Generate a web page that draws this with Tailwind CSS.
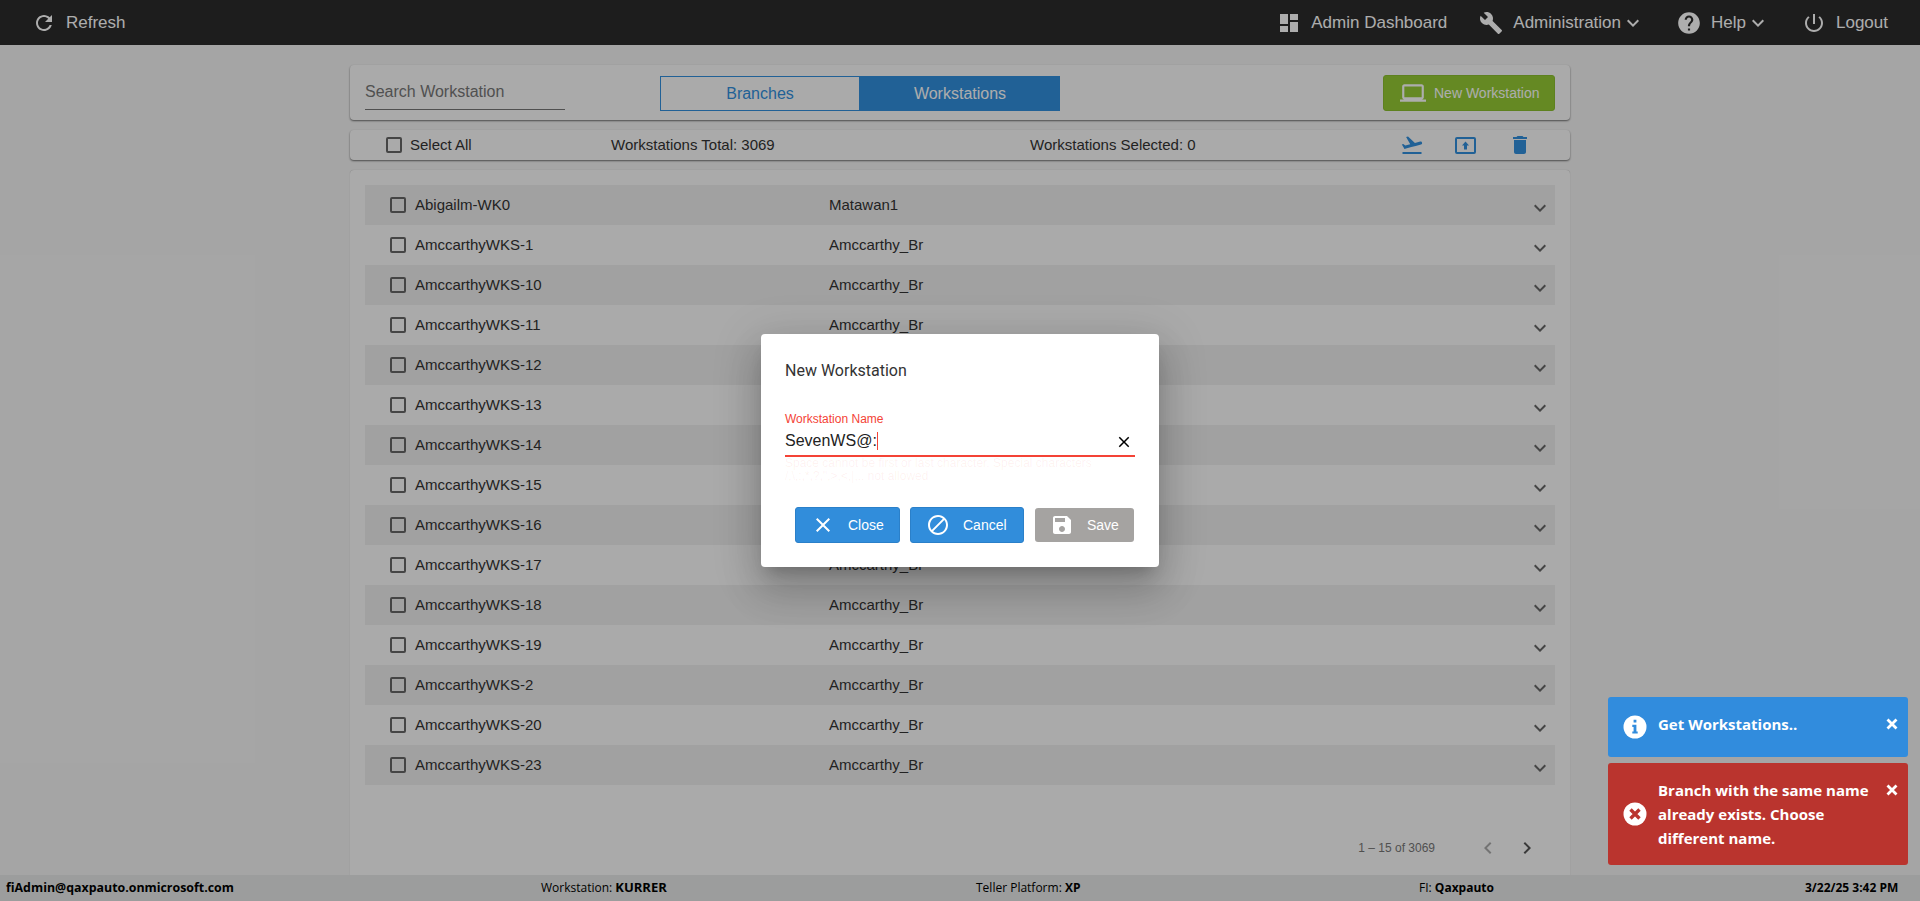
<!DOCTYPE html>
<html>
<head>
<meta charset="utf-8">
<script src="https://cdn.jsdelivr.net/npm/@tailwindcss/browser@4"></script>
</head>
<body class="font-['Liberation_Sans',sans-serif]">
<div class="relative h-[901px] w-[1920px] overflow-hidden bg-[#f4f4f4] flex flex-col">
  <header class="h-[45px] shrink-0 bg-[#2b2b2b] text-white text-[17px] flex items-center pl-[32px] pr-[32px]">
    <div class="flex items-center">
      <svg class="w-6 h-6 mr-[10px]" viewBox="0 0 24 24" fill="currentColor"><path d="M17.65 6.35C16.2 4.9 14.21 4 12 4c-4.42 0-7.99 3.58-7.99 8s3.57 8 7.99 8c3.73 0 6.84-2.55 7.73-6h-2.08c-.82 2.33-3.04 4-5.65 4-3.31 0-6-2.69-6-6s2.69-6 6-6c1.66 0 3.14.69 4.22 1.78L13 11h7V4l-2.35 2.35z"/></svg>
      <span>Refresh</span>
    </div>
    <div class="ml-auto flex items-center">
      <svg class="w-6 h-6 mr-[10px]" viewBox="0 0 24 24" fill="currentColor"><path d="M3 13h8V3H3v10zm0 8h8v-6H3v6zm10 0h8V11h-8v10zm0-18v6h8V3h-8z"/></svg>
      <span>Admin Dashboard</span>
      <svg class="w-6 h-6 ml-[32px] mr-[10px]" viewBox="0 0 24 24" fill="currentColor"><path d="M22.7 19l-9.1-9.1c.9-2.3.4-5-1.5-6.9-2-2-5-2.4-7.4-1.3L9 6 6 9 1.6 4.7C.4 7.1.9 10.1 2.9 12.1c1.9 1.9 4.6 2.4 6.9 1.5l9.1 9.1c.4.4 1 .4 1.4 0l2.3-2.3c.5-.4.5-1.1.1-1.4z"/></svg>
      <span>Administration</span>
      <svg class="w-6 h-6" viewBox="0 0 24 24" fill="currentColor"><path d="M16.59 8.59L12 13.17 7.41 8.59 6 10l6 6 6-6z"/></svg>
      <svg class="w-[26px] h-[26px] ml-[31px] mr-[9px]" viewBox="0 0 24 24" fill="currentColor"><path d="M12 2C6.48 2 2 6.48 2 12s4.48 10 10 10 10-4.48 10-10S17.52 2 12 2zm1 17h-2v-2h2v2zm2.07-7.75l-.9.92C13.45 12.9 13 13.5 13 15h-2v-.5c0-1.1.45-2.1 1.17-2.83l1.24-1.26c.37-.36.59-.86.59-1.41 0-1.1-.9-2-2-2s-2 .9-2 2H8c0-2.21 1.79-4 4-4s4 1.79 4 4c0 .88-.36 1.68-.93 2.25z"/></svg>
      <span>Help</span>
      <svg class="w-6 h-6" viewBox="0 0 24 24" fill="currentColor"><path d="M16.59 8.59L12 13.17 7.41 8.59 6 10l6 6 6-6z"/></svg>
      <svg class="w-6 h-6 ml-[32px] mr-[10px]" viewBox="0 0 24 24" fill="currentColor"><path d="M13 3h-2v10h2V3zm4.83 2.17l-1.42 1.42C17.99 7.86 19 9.81 19 12c0 3.87-3.13 7-7 7s-7-3.13-7-7c0-2.19 1.01-4.14 2.58-5.42L6.17 5.17C4.23 6.82 3 9.26 3 12c0 4.97 4.03 9 9 9s9-4.03 9-9c0-2.74-1.23-5.18-3.17-6.83z"/></svg>
      <span>Logout</span>
    </div>
  </header>

  <main class="flex-1 min-h-0 w-[1220px] mx-auto pt-5 flex flex-col gap-[10px]">
    <section class="h-[55px] shrink-0 bg-[#fbfbfb] rounded shadow-[0_1px_2px_rgba(0,0,0,0.55)] flex items-center pl-[15px] pr-[15px]">
      <div class="w-[200px] h-[35px] -mt-[1px] border-b border-[#777] text-base text-[#777] flex items-center">Search Workstation</div>
      <div class="ml-[95px] mt-[2px] flex h-[35px] w-[400px] text-base">
        <div class="w-[200px] border border-[#318fdd] text-[#318fdd] flex items-center justify-center">Branches</div>
        <div class="w-[200px] bg-[#318fdd] text-white flex items-center justify-center">Workstations</div>
      </div>
      <button class="ml-auto mt-[1px] w-[172px] h-[36px] rounded-[3px] bg-[#95cb34] border border-[#8bbf2e] text-white text-sm flex items-center pl-[16px]">
        <svg class="w-[26px] h-[26px] mr-[8px]" viewBox="0 0 24 24" fill="currentColor"><path d="M20 18c1.1 0 1.99-.9 1.99-2L22 6c0-1.1-.9-2-2-2H4c-1.1 0-2 .9-2 2v10c0 1.1.9 2 2 2H0v2h24v-2h-4zM4 6h16v10H4V6z"/></svg>
        New Workstation
      </button>
    </section>

    <section class="h-[30px] shrink-0 bg-[#fbfbfb] rounded shadow-[0_1px_2px_rgba(0,0,0,0.55)] flex items-center text-[15px] text-[#333]">
      <span class="ml-[36px] w-[16px] h-[16px] border-2 border-[#666] rounded-[2px]"></span>
      <span class="ml-[8px] w-[201px]">Select All</span>
      <span class="w-[419px]">Workstations Total: 3069</span>
      <span class="w-[370px]">Workstations Selected: 0</span>
      <svg class="w-[24px] h-[24px] text-[#318fdd]" viewBox="0 0 24 24" fill="currentColor"><path d="M2.5 19h19v2h-19zm19.57-9.36c-.21-.8-1.04-1.28-1.84-1.06L14.92 10l-6.9-6.43-1.93.51 4.14 7.17-4.97 1.33-1.97-1.54-1.45.39 1.82 3.16.77 1.33 1.6-.43 5.31-1.42 4.35-1.16L21 11.49c.81-.23 1.28-1.05 1.07-1.85z"/></svg>
      <svg class="w-[21px] h-[17px] ml-[31px] text-[#318fdd]" viewBox="0 0 21 17" fill="none" stroke="currentColor"><rect x="1" y="1" width="19" height="15" rx="1" stroke-width="2"/><path fill="currentColor" stroke="none" d="M10.5 4.5l3.5 4h-2v4h-3v-4H7z"/></svg>
      <svg class="w-[24px] h-[24px] ml-[32px] text-[#318fdd]" viewBox="0 0 24 24" fill="currentColor"><path d="M6 19c0 1.1.9 2 2 2h8c1.1 0 2-.9 2-2V7H6v12zM19 4h-3.5l-1-1h-5l-1 1H5v2h14V4z"/></svg>
    </section>

    <section class="flex-1 min-h-0 bg-[#fbfbfb] rounded-t shadow-[0_0_1px_rgba(0,0,0,0.3)] pt-[15px] px-[15px] text-[15px] text-[#333]">
      <div class="h-[40px] bg-[#eeeeee] flex items-center"><span class="ml-[25px] w-[16px] h-[16px] border-2 border-[#666] rounded-[2px]"></span><span class="ml-[9px] w-[414px]">Abigailm-WK0</span><span class="flex-1">Matawan1</span><svg class="w-6 h-6 mt-[5px] mr-[3px] text-[#666]" viewBox="0 0 24 24" fill="currentColor"><path d="M16.59 8.59L12 13.17 7.41 8.59 6 10l6 6 6-6z"/></svg></div>
      <div class="h-[40px] flex items-center"><span class="ml-[25px] w-[16px] h-[16px] border-2 border-[#666] rounded-[2px]"></span><span class="ml-[9px] w-[414px]">AmccarthyWKS-1</span><span class="flex-1">Amccarthy_Br</span><svg class="w-6 h-6 mt-[5px] mr-[3px] text-[#666]" viewBox="0 0 24 24" fill="currentColor"><path d="M16.59 8.59L12 13.17 7.41 8.59 6 10l6 6 6-6z"/></svg></div>
      <div class="h-[40px] bg-[#eeeeee] flex items-center"><span class="ml-[25px] w-[16px] h-[16px] border-2 border-[#666] rounded-[2px]"></span><span class="ml-[9px] w-[414px]">AmccarthyWKS-10</span><span class="flex-1">Amccarthy_Br</span><svg class="w-6 h-6 mt-[5px] mr-[3px] text-[#666]" viewBox="0 0 24 24" fill="currentColor"><path d="M16.59 8.59L12 13.17 7.41 8.59 6 10l6 6 6-6z"/></svg></div>
      <div class="h-[40px] flex items-center"><span class="ml-[25px] w-[16px] h-[16px] border-2 border-[#666] rounded-[2px]"></span><span class="ml-[9px] w-[414px]">AmccarthyWKS-11</span><span class="flex-1">Amccarthy_Br</span><svg class="w-6 h-6 mt-[5px] mr-[3px] text-[#666]" viewBox="0 0 24 24" fill="currentColor"><path d="M16.59 8.59L12 13.17 7.41 8.59 6 10l6 6 6-6z"/></svg></div>
      <div class="h-[40px] bg-[#eeeeee] flex items-center"><span class="ml-[25px] w-[16px] h-[16px] border-2 border-[#666] rounded-[2px]"></span><span class="ml-[9px] w-[414px]">AmccarthyWKS-12</span><span class="flex-1">Amccarthy_Br</span><svg class="w-6 h-6 mt-[5px] mr-[3px] text-[#666]" viewBox="0 0 24 24" fill="currentColor"><path d="M16.59 8.59L12 13.17 7.41 8.59 6 10l6 6 6-6z"/></svg></div>
      <div class="h-[40px] flex items-center"><span class="ml-[25px] w-[16px] h-[16px] border-2 border-[#666] rounded-[2px]"></span><span class="ml-[9px] w-[414px]">AmccarthyWKS-13</span><span class="flex-1">Amccarthy_Br</span><svg class="w-6 h-6 mt-[5px] mr-[3px] text-[#666]" viewBox="0 0 24 24" fill="currentColor"><path d="M16.59 8.59L12 13.17 7.41 8.59 6 10l6 6 6-6z"/></svg></div>
      <div class="h-[40px] bg-[#eeeeee] flex items-center"><span class="ml-[25px] w-[16px] h-[16px] border-2 border-[#666] rounded-[2px]"></span><span class="ml-[9px] w-[414px]">AmccarthyWKS-14</span><span class="flex-1">Amccarthy_Br</span><svg class="w-6 h-6 mt-[5px] mr-[3px] text-[#666]" viewBox="0 0 24 24" fill="currentColor"><path d="M16.59 8.59L12 13.17 7.41 8.59 6 10l6 6 6-6z"/></svg></div>
      <div class="h-[40px] flex items-center"><span class="ml-[25px] w-[16px] h-[16px] border-2 border-[#666] rounded-[2px]"></span><span class="ml-[9px] w-[414px]">AmccarthyWKS-15</span><span class="flex-1">Amccarthy_Br</span><svg class="w-6 h-6 mt-[5px] mr-[3px] text-[#666]" viewBox="0 0 24 24" fill="currentColor"><path d="M16.59 8.59L12 13.17 7.41 8.59 6 10l6 6 6-6z"/></svg></div>
      <div class="h-[40px] bg-[#eeeeee] flex items-center"><span class="ml-[25px] w-[16px] h-[16px] border-2 border-[#666] rounded-[2px]"></span><span class="ml-[9px] w-[414px]">AmccarthyWKS-16</span><span class="flex-1">Amccarthy_Br</span><svg class="w-6 h-6 mt-[5px] mr-[3px] text-[#666]" viewBox="0 0 24 24" fill="currentColor"><path d="M16.59 8.59L12 13.17 7.41 8.59 6 10l6 6 6-6z"/></svg></div>
      <div class="h-[40px] flex items-center"><span class="ml-[25px] w-[16px] h-[16px] border-2 border-[#666] rounded-[2px]"></span><span class="ml-[9px] w-[414px]">AmccarthyWKS-17</span><span class="flex-1">Amccarthy_Br</span><svg class="w-6 h-6 mt-[5px] mr-[3px] text-[#666]" viewBox="0 0 24 24" fill="currentColor"><path d="M16.59 8.59L12 13.17 7.41 8.59 6 10l6 6 6-6z"/></svg></div>
      <div class="h-[40px] bg-[#eeeeee] flex items-center"><span class="ml-[25px] w-[16px] h-[16px] border-2 border-[#666] rounded-[2px]"></span><span class="ml-[9px] w-[414px]">AmccarthyWKS-18</span><span class="flex-1">Amccarthy_Br</span><svg class="w-6 h-6 mt-[5px] mr-[3px] text-[#666]" viewBox="0 0 24 24" fill="currentColor"><path d="M16.59 8.59L12 13.17 7.41 8.59 6 10l6 6 6-6z"/></svg></div>
      <div class="h-[40px] flex items-center"><span class="ml-[25px] w-[16px] h-[16px] border-2 border-[#666] rounded-[2px]"></span><span class="ml-[9px] w-[414px]">AmccarthyWKS-19</span><span class="flex-1">Amccarthy_Br</span><svg class="w-6 h-6 mt-[5px] mr-[3px] text-[#666]" viewBox="0 0 24 24" fill="currentColor"><path d="M16.59 8.59L12 13.17 7.41 8.59 6 10l6 6 6-6z"/></svg></div>
      <div class="h-[40px] bg-[#eeeeee] flex items-center"><span class="ml-[25px] w-[16px] h-[16px] border-2 border-[#666] rounded-[2px]"></span><span class="ml-[9px] w-[414px]">AmccarthyWKS-2</span><span class="flex-1">Amccarthy_Br</span><svg class="w-6 h-6 mt-[5px] mr-[3px] text-[#666]" viewBox="0 0 24 24" fill="currentColor"><path d="M16.59 8.59L12 13.17 7.41 8.59 6 10l6 6 6-6z"/></svg></div>
      <div class="h-[40px] flex items-center"><span class="ml-[25px] w-[16px] h-[16px] border-2 border-[#666] rounded-[2px]"></span><span class="ml-[9px] w-[414px]">AmccarthyWKS-20</span><span class="flex-1">Amccarthy_Br</span><svg class="w-6 h-6 mt-[5px] mr-[3px] text-[#666]" viewBox="0 0 24 24" fill="currentColor"><path d="M16.59 8.59L12 13.17 7.41 8.59 6 10l6 6 6-6z"/></svg></div>
      <div class="h-[40px] bg-[#eeeeee] flex items-center"><span class="ml-[25px] w-[16px] h-[16px] border-2 border-[#666] rounded-[2px]"></span><span class="ml-[9px] w-[414px]">AmccarthyWKS-23</span><span class="flex-1">Amccarthy_Br</span><svg class="w-6 h-6 mt-[5px] mr-[3px] text-[#666]" viewBox="0 0 24 24" fill="currentColor"><path d="M16.59 8.59L12 13.17 7.41 8.59 6 10l6 6 6-6z"/></svg></div>
      <div class="mt-[47px] flex items-center justify-end h-[32px] text-xs text-[#777]">
        <span>1 – 15 of 3069</span>
        <svg class="w-6 h-6 ml-[41px] text-[#aaa]" viewBox="0 0 24 24" fill="currentColor"><path d="M15.41 7.41L14 6l-6 6 6 6 1.41-1.41L10.83 12z"/></svg>
        <svg class="w-6 h-6 ml-[15px] mr-[16px] text-[#555]" viewBox="0 0 24 24" fill="currentColor"><path d="M10 6L8.59 7.41 13.17 12l-4.58 4.59L10 18l6-6z"/></svg>
      </div>
    </section>
  </main>

  <footer class="h-[26px] shrink-0 bg-[#e6e8e7] flex items-center pl-[6px] text-xs text-black font-['Open_Sans',sans-serif]">
    <span class="w-[535px] font-bold text-[12.4px]">fiAdmin@qaxpauto.onmicrosoft.com</span>
    <span class="w-[435px]">Workstation: <b class="text-[13px]">KURRER</b></span>
    <span class="w-[443px]">Teller Platform: <b>XP</b></span>
    <span class="w-[386px]">FI: <b>Qaxpauto</b></span>
    <b>3/22/25 3:42 PM</b>
  </footer>

  <div class="absolute inset-0 bg-black/32 flex items-center justify-center">
    <div class="w-[398px] h-[233px] bg-white rounded-[4px] shadow-[0_11px_15px_-7px_rgba(0,0,0,0.2),0_24px_38px_3px_rgba(0,0,0,0.14),0_9px_46px_8px_rgba(0,0,0,0.12)] pt-[27px] px-6 flex flex-col">
      <h2 class="text-base leading-5 text-[#333] font-['Roboto',sans-serif]">New Workstation</h2>
      <label class="mt-[31px] text-xs leading-[14px] text-[#f44336]">Workstation Name</label>
      <div class="mt-[1px] h-[30px] border-b-2 border-[#f44336] flex items-center text-base text-[#222]">
        <span>SevenWS@:</span><span class="w-px h-[18px] bg-[#f44336]"></span>
        <svg class="w-[18px] h-[18px] ml-auto mr-[2px] mt-[1px] text-black" viewBox="0 0 24 24" fill="currentColor"><path d="M19 6.41L17.59 5 12 10.59 6.41 5 5 6.41 10.59 12 5 17.59 6.41 19 12 13.41 17.59 19 19 17.59 13.41 12z"/></svg>
      </div>
      <p class="text-xs leading-[13px] text-[#f44336]/[0.07] w-[320px]">Space cannot be first or last character. Special characters /,\,:,*,?,",&gt;,&lt;,|,.. not allowed</p>
      <div class="mt-[24px] ml-[10px] flex items-center text-sm text-white">
        <button class="w-[105px] h-[36px] rounded-[3px] bg-[#318ddb] border border-[#2b80c9] flex items-center pl-[15px]">
          <svg class="w-[24px] h-[24px] mr-[13px]" viewBox="0 0 24 24" fill="currentColor"><path d="M19 6.41L17.59 5 12 10.59 6.41 5 5 6.41 10.59 12 5 17.59 6.41 19 12 13.41 17.59 19 19 17.59 13.41 12z"/></svg>Close
        </button>
        <button class="ml-[10px] w-[114px] h-[36px] rounded-[3px] bg-[#318ddb] border border-[#2b80c9] flex items-center pl-[15px]">
          <svg class="w-[24px] h-[24px] mr-[13px]" viewBox="0 0 24 24" fill="currentColor"><path d="M12 2C6.48 2 2 6.48 2 12s4.48 10 10 10 10-4.48 10-10S17.52 2 12 2zM4 12c0-4.42 3.58-8 8-8 1.85 0 3.55.63 4.9 1.69L5.69 16.9C4.63 15.55 4 13.85 4 12zm8 8c-1.85 0-3.55-.63-4.9-1.69L18.31 7.1C19.37 8.45 20 10.15 20 12c0 4.42-3.58 8-8 8z"/></svg>Cancel
        </button>
        <button class="ml-[11px] w-[99px] h-[34px] rounded-[3px] bg-[#a5a3a1] flex items-center pl-[15px]">
          <svg class="w-[24px] h-[24px] mr-[13px]" viewBox="0 0 24 24" fill="currentColor"><path d="M17 3H5c-1.11 0-2 .9-2 2v14c0 1.1.89 2 2 2h14c1.1 0 2-.9 2-2V7l-4-4zm-5 16c-1.66 0-3-1.34-3-3s1.34-3 3-3 3 1.34 3 3-1.34 3-3 3zm3-10H5V5h10v4z"/></svg>Save
        </button>
      </div>
    </div>
  </div>

  <div class="absolute right-3 bottom-9 w-[300px] flex flex-col gap-[6px] text-white text-[15px] font-bold leading-6 font-['Open_Sans',sans-serif]">
    <div class="h-[60px] rounded-[3px] bg-[#318cdd] flex items-center pl-[15px] relative">
      <svg class="w-[24px] h-[24px] mr-[11px]" viewBox="0 0 24 24"><circle cx="12" cy="12" r="11.5" fill="#fff"/><path fill="#318cdd" d="M10.6 4.8h2.8v2.8h-2.8zM9.3 9.8h4.1v6.6h1.3v2.2H9.3v-2.2h1.3v-4.4H9.3z"/></svg>
      <span class="mb-[6px]">Get Workstations..</span>
      <span class="absolute right-[10px] top-[21px] leading-none"><svg class="w-[12px] h-[12px]" viewBox="0 0 12 12" fill="none" stroke="#fff" stroke-width="2.8"><path d="M1.5 1.5l9 9M10.5 1.5l-9 9"/></svg></span>
    </div>
    <div class="h-[102px] rounded-[3px] bg-[#ba342e] flex items-center pl-[15px] relative">
      <svg class="w-[24px] h-[24px] mr-[11px] shrink-0" viewBox="0 0 24 24"><circle cx="12" cy="12" r="11.5" fill="#fff"/><path stroke="#ba342e" stroke-width="3.4" d="M7.5 7.5l9 9M16.5 7.5l-9 9"/></svg>
      <span class="w-[225px]">Branch with the same name already exists. Choose different name.</span>
      <span class="absolute right-[10px] top-[21px] leading-none"><svg class="w-[12px] h-[12px]" viewBox="0 0 12 12" fill="none" stroke="#fff" stroke-width="2.8"><path d="M1.5 1.5l9 9M10.5 1.5l-9 9"/></svg></span>
    </div>
  </div>
</div>
</body>
</html>
